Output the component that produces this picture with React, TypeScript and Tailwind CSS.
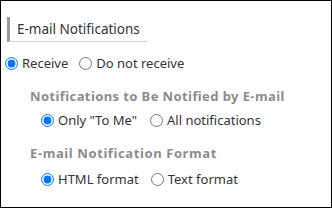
export default function App() {
  return (
    <div className="h-[208px] w-[332px] border border-black bg-white font-['Noto_Sans',sans-serif] text-[13px] text-[#333]">
      <div className="ml-[6px] mt-[16px] w-[140px] border-b border-[#ccc] border-l-[3px] border-l-[#999] pl-[7px] text-[13.5px] leading-[24px]">
        E-mail Notifications
      </div>
      <div className="mt-[12px] flex items-center pl-[4px]">
        <label className="flex items-center">
          <input type="radio" name="recv" defaultChecked className="m-0 h-[13px] w-[13px]" />
          <span className="ml-[4px]">Receive</span>
        </label>
        <label className="ml-[11px] flex items-center">
          <input type="radio" name="recv" className="m-0 h-[13px] w-[13px]" />
          <span className="ml-[4px]">Do not receive</span>
        </label>
      </div>
      <div className="mt-[13px] pl-[29px] font-bold tracking-[0.4px] text-[#8c8c8c]">
        Notifications to Be Notified by E-mail
      </div>
      <div className="mt-[5px] flex items-center pl-[40px]">
        <label className="flex items-center">
          <input type="radio" name="scope" defaultChecked className="m-0 h-[13px] w-[13px]" />
          <span className="ml-[4px]">Only "To Me"</span>
        </label>
        <label className="ml-[13px] flex items-center">
          <input type="radio" name="scope" className="m-0 h-[13px] w-[13px]" />
          <span className="ml-[4px]">All notifications</span>
        </label>
      </div>
      <div className="mt-[13px] pl-[29px] font-bold tracking-[0.6px] text-[#8c8c8c]">
        E-mail Notification Format
      </div>
      <div className="mt-[7px] flex items-center pl-[40px]">
        <label className="flex items-center">
          <input type="radio" name="fmt" defaultChecked className="m-0 h-[13px] w-[13px]" />
          <span className="ml-[4px]">HTML format</span>
        </label>
        <label className="ml-[12px] flex items-center">
          <input type="radio" name="fmt" className="m-0 h-[13px] w-[13px]" />
          <span className="ml-[4px]">Text format</span>
        </label>
      </div>
    </div>
  );
}
